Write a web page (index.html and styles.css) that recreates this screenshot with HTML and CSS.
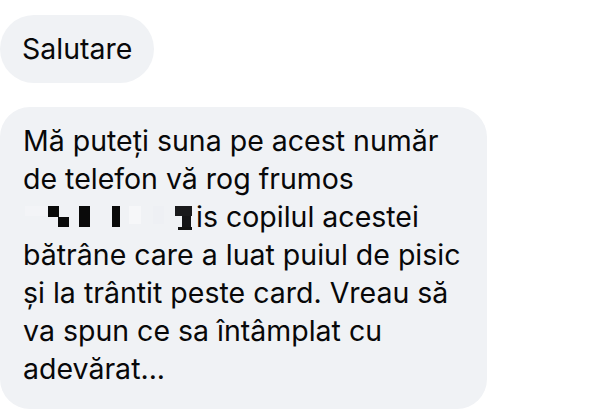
FILE: index.html
```html
<!DOCTYPE html>
<html lang="ro">
<head>
<meta charset="utf-8">
<link rel="stylesheet" href="styles.css">
</head>
<body>
<div class="chat">
  <div class="bubble short">Salutare</div>
  <div class="bubble long">Mă puteți suna pe acest număr<br>de telefon vă rog frumos<br><svg class="redact" width="173" height="28" viewBox="0 0 173 28" aria-hidden="true"><rect x="2" y="3" width="22" height="10" fill="#f3f4f7"/><rect x="25" y="3" width="11" height="11" fill="#0a0a0a"/><rect x="35" y="14" width="11" height="10" fill="#0a0a0a"/><rect x="56" y="3" width="11" height="21" fill="#0a0a0a"/><rect x="89" y="3" width="8" height="21" fill="#0a0a0a"/><rect x="106" y="3" width="12" height="18" fill="#f6f7f9"/><rect x="130" y="3" width="11" height="18" fill="#eef0f4"/><rect x="152" y="3" width="17" height="10" fill="#1a1a1c"/><rect x="159" y="13" width="9" height="11" fill="#141416"/><rect x="155" y="24" width="14" height="3" fill="#111"/></svg>is copilul acestei<br>bătrâne care a luat puiul de pisic<br>și la trântit peste card. Vreau să<br>va spun ce sa întâmplat cu<br>adevărat...</div>
</div>
</body>
</html>
```

FILE: styles.css
```css
html, body {
  margin: 0;
  padding: 0;
  background: #ffffff;
}

.chat {
  display: flex;
  flex-direction: column;
  align-items: flex-start;
  gap: 24px;
  padding-top: 15px;
}

.bubble {
  background: #f0f2f5;
  color: #080809;
  font-family: Inter, "Noto Sans", sans-serif;
  font-size: 28.5px;
  line-height: 38px;
  box-sizing: border-box;
  white-space: nowrap;
}

.short {
  height: 68px;
  padding: 15px 22px 0;
  border-radius: 34px;
}

.long {
  width: 487px;
  height: 302px;
  padding: 15px 22px 0 23px;
  border-radius: 30px;
}

.redact {
  vertical-align: -4px;
}
```
